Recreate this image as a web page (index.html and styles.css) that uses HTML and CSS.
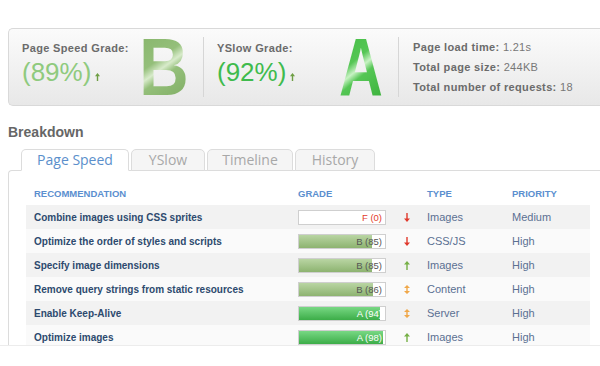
FILE: index.html
```html
<!DOCTYPE html>
<html>
<head>
<meta charset="utf-8">
<link rel="stylesheet" href="styles.css">
</head>
<body>
<div class="summary">
  <div class="grade">
    <div class="g-text">
      <div class="g-label">Page Speed Grade:</div>
      <div class="g-pct pct-b">(89%)<svg class="trend" viewBox="0 0 5 8" width="5" height="8"><path d="M2.5 0 L5 3.2 L3.2 3.2 L3.2 8 L1.8 8 L1.8 3.2 L0 3.2 Z"/></svg></div>
    </div>
    <div class="big big-b">B</div>
  </div>
  <div class="grade">
    <div class="g-text">
      <div class="g-label">YSlow Grade:</div>
      <div class="g-pct pct-a">(92%)<svg class="trend" viewBox="0 0 5 8" width="5" height="8"><path d="M2.5 0 L5 3.2 L3.2 3.2 L3.2 8 L1.8 8 L1.8 3.2 L0 3.2 Z"/></svg></div>
    </div>
    <div class="big big-a">A</div>
  </div>
  <div class="stats">
    <div><b>Page load time:</b> 1.21s</div>
    <div><b>Total page size:</b> 244KB</div>
    <div><b>Total number of requests:</b> 18</div>
  </div>
</div>

<h2 class="heading">Breakdown</h2>

<div class="tabs">
  <div class="tab tab-ps active">Page Speed</div>
  <div class="tab tab-ys">YSlow</div>
  <div class="tab tab-tl">Timeline</div>
  <div class="tab tab-hi">History</div>
</div>

<div class="panel">
  <div class="table">
    <div class="row head">
      <div class="c-rec">RECOMMENDATION</div>
      <div class="c-grade">GRADE</div>
      <div class="c-arrow"></div>
      <div class="c-type">TYPE</div>
      <div class="c-pri">PRIORITY</div>
    </div>
    <div class="row odd">
      <div class="c-rec">Combine images using CSS sprites</div>
      <div class="c-grade"><div class="bar"><div class="fill" style="width:0%"></div><span class="lbl lbl-f">F (0)</span></div></div>
      <div class="c-arrow"><svg class="arr down" viewBox="0 0 6 9" width="6" height="9"><path d="M3 9 L6 5.6 L3.7 5.6 L3.7 0 L2.3 0 L2.3 5.6 L0 5.6 Z"/></svg></div>
      <div class="c-type">Images</div>
      <div class="c-pri">Medium</div>
    </div>
    <div class="row even">
      <div class="c-rec">Optimize the order of styles and scripts</div>
      <div class="c-grade"><div class="bar"><div class="fill fill-b" style="width:85%"></div><span class="lbl">B (85)</span></div></div>
      <div class="c-arrow"><svg class="arr down" viewBox="0 0 6 9" width="6" height="9"><path d="M3 9 L6 5.6 L3.7 5.6 L3.7 0 L2.3 0 L2.3 5.6 L0 5.6 Z"/></svg></div>
      <div class="c-type">CSS/JS</div>
      <div class="c-pri">High</div>
    </div>
    <div class="row odd">
      <div class="c-rec">Specify image dimensions</div>
      <div class="c-grade"><div class="bar"><div class="fill fill-b" style="width:85%"></div><span class="lbl">B (85)</span></div></div>
      <div class="c-arrow"><svg class="arr up" viewBox="0 0 6 9" width="6" height="9"><path d="M3 0 L6 3.4 L3.7 3.4 L3.7 9 L2.3 9 L2.3 3.4 L0 3.4 Z"/></svg></div>
      <div class="c-type">Images</div>
      <div class="c-pri">High</div>
    </div>
    <div class="row even">
      <div class="c-rec">Remove query strings from static resources</div>
      <div class="c-grade"><div class="bar"><div class="fill fill-b" style="width:86%"></div><span class="lbl">B (86)</span></div></div>
      <div class="c-arrow"><svg class="arr both" viewBox="0 0 6 9" width="6" height="9"><path d="M3 0 L6 3 L3.7 3 L3.7 6 L6 6 L3 9 L0 6 L2.3 6 L2.3 3 L0 3 Z"/></svg></div>
      <div class="c-type">Content</div>
      <div class="c-pri">High</div>
    </div>
    <div class="row odd">
      <div class="c-rec">Enable Keep-Alive</div>
      <div class="c-grade"><div class="bar"><div class="fill fill-a" style="width:94%"></div><span class="lbl lbl-a">A (94)</span></div></div>
      <div class="c-arrow"><svg class="arr both" viewBox="0 0 6 9" width="6" height="9"><path d="M3 0 L6 3 L3.7 3 L3.7 6 L6 6 L3 9 L0 6 L2.3 6 L2.3 3 L0 3 Z"/></svg></div>
      <div class="c-type">Server</div>
      <div class="c-pri">High</div>
    </div>
    <div class="row even">
      <div class="c-rec">Optimize images</div>
      <div class="c-grade"><div class="bar"><div class="fill fill-a" style="width:98%"></div><span class="lbl lbl-a">A (98)</span></div></div>
      <div class="c-arrow"><svg class="arr up" viewBox="0 0 6 9" width="6" height="9"><path d="M3 0 L6 3.4 L3.7 3.4 L3.7 9 L2.3 9 L2.3 3.4 L0 3.4 Z"/></svg></div>
      <div class="c-type">Images</div>
      <div class="c-pri">High</div>
    </div>
  </div>
</div>
<div class="footer"></div>
</body>
</html>
```
FILE: styles.css
```css
* { box-sizing: border-box; }
html, body { margin: 0; padding: 0; background: #fff; }
body {
  font-family: "Liberation Sans", Arial, sans-serif;
  width: 600px;
  height: 366px;
  overflow: hidden;
}

/* summary card */
.summary {
  margin: 28px 0 0 8px;
  height: 78px;
  border: 1px solid #d9d9d9;
  border-right: none;
  border-radius: 5px 0 0 5px;
  background: linear-gradient(#fbfbfb, #e8e8e8);
  display: flex;
  align-items: center;
}
.grade {
  width: 195px;
  height: 60px;
  border-right: 1px solid #d6d6d6;
  padding-left: 13px;
  display: flex;
  align-items: flex-start;
}
.g-text { width: 117px; padding-top: 4px; }
.g-label {
  font-size: 11px;
  line-height: 14px;
  font-weight: bold;
  color: #6b6b6b;
  letter-spacing: 0.35px;
  white-space: nowrap;
}
.g-pct {
  margin-top: 2px;
  font-size: 26px;
  line-height: 30px;
  white-space: nowrap;
}
.pct-b { color: #8fca7e; }
.pct-a { color: #3fbb4d; }
.trend { fill: #6e9e44; margin-left: 4px; vertical-align: 0; }

.big {
  font-size: 82px;
  line-height: 60px;
  height: 60px;
  font-weight: bold;
  color: transparent;
  -webkit-background-clip: text;
  background-clip: text;
  transform-origin: left center;
}
.big-b {
  background-image: linear-gradient(149deg, #88b66c 0%, #94bf7a 38%, #d8ebcb 50%, #94bf7a 60%, #80ae64 100%);
  transform: scaleX(0.84);
}
.big-a {
  margin-left: 8px;
  background-image: linear-gradient(149deg, #45bd45 0%, #55c655 38%, #c8f2c4 50%, #55c655 60%, #3db23d 100%);
  transform: scaleX(0.74);
}

.stats {
  align-self: flex-start;
  margin-top: 8px;
  padding-left: 14px;
  font-size: 11px;
  line-height: 20px;
  color: #777;
  letter-spacing: 0.3px;
  white-space: nowrap;
}
.stats b { color: #6b6b6b; letter-spacing: 0.35px; }

/* breakdown */
.heading {
  margin: 17px 0 0 8px;
  font-size: 14px;
  line-height: 18px;
  font-weight: bold;
  color: #666;
}

.tabs {
  margin-top: 8px;
  padding-left: 21px;
  display: flex;
  gap: 2px;
  margin-bottom: -1px;
}
.tab {
  position: relative;
  height: 22px;
  border: 1px solid #dcdcdc;
  border-radius: 5px 5px 0 0;
  background: #f5f5f5;
  font-family: "Open Sans", "Liberation Sans", sans-serif;
  font-size: 14px;
  line-height: 20px;
  color: #a8a8a8;
  text-align: center;
  white-space: nowrap;
}
.tab-ps { width: 108px; }
.tab-ys { width: 74px; }
.tab-tl { width: 86px; }
.tab-hi { width: 80px; }
.tab.active {
  background: #fff;
  border-bottom-color: #fff;
  color: #5b8fcb;
}

.panel {
  margin-left: 8px;
  height: 175px;
  overflow: hidden;
  border-top: 1px solid #dcdcdc;
  border-left: 1px solid #dcdcdc;
  border-top-left-radius: 4px;
  background: #fff;
}
.table { padding: 11px 10px 0 17px; }
.row {
  display: grid;
  grid-template-columns: 264px 104px 25px 85px 1fr;
  align-items: center;
  height: 24px;
}
.row > div { padding-left: 8px; white-space: nowrap; }
.row > .c-arrow { padding-left: 0; display: flex; justify-content: center; }
.row.head { height: 23px; }
.head > div {
  font-size: 9.5px;
  font-weight: bold;
  color: #5b8fcf;
}
.odd { background: #f2f2f2; }
.even { background: #fafafa; }
.c-rec { font-size: 10px; font-weight: bold; color: #2d4a6e; }
.c-type, .c-pri { font-size: 11px; color: #5b7092; }

.bar {
  width: 88px;
  height: 15px;
  border: 1px solid #cfcfcf;
  background: #fff;
  display: grid;
}
.bar > * { grid-area: 1 / 1; }
.fill { height: 13px; }
.fill-b { background: linear-gradient(#b9d5a3, #8db370); }
.fill-a { background: linear-gradient(#78d884, #3cad48); }
.lbl {
  justify-self: end;
  padding-right: 3px;
  font-size: 9.5px;
  line-height: 13px;
  color: #555;
}
.lbl-f { color: #e33b2e; }
.lbl-a { color: #fff; }

.arr { display: block; }
.arr.down { fill: #e0392c; }
.arr.up { fill: #76b046; }
.arr.both { fill: #f0a84a; }

.footer {
  height: 30px;
  border-top: 1px solid #ececec;
  background: #fff;
}
```
